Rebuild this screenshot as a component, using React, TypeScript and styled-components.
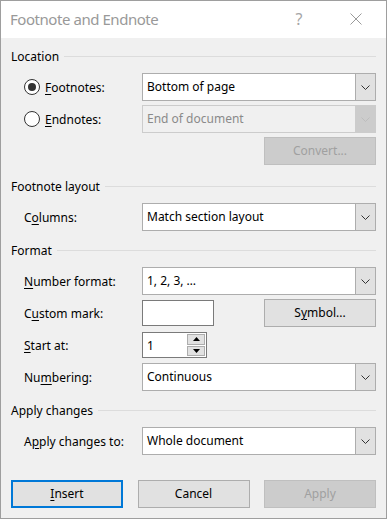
import React from "react";
import styled, { createGlobalStyle, css } from "styled-components";

const Global = createGlobalStyle`
  html, body { margin: 0; padding: 0; background: #fff; }
  body {
    font-family: "Noto Sans", "Open Sans", "DejaVu Sans", sans-serif;
    font-size: 12px;
    color: #000;
  }
  * { box-sizing: border-box; }
`;

const Window = styled.div`
  width: 387px;
  height: 519px;
  border: 1px solid #9e9e9e;
  display: flex;
  flex-direction: column;
  background: #f0f0f0;
`;

const TitleBar = styled.div`
  height: 37px;
  background: #fff;
  display: flex;
  align-items: center;
  padding-left: 9px;
  flex-shrink: 0;
`;

const Title = styled.div`
  flex: 1;
  font-size: 15px;
  letter-spacing: -0.45px;
  color: #999;
  padding-bottom: 2px;
`;

const Help = styled.div`
  width: 40px;
  text-align: center;
  font-size: 16px;
  color: #a6a6a6;
  margin-right: 14px;
  padding-bottom: 2px;
`;

const CloseBtn = styled.div`
  width: 46px;
  height: 37px;
  margin-right: 7px;
  display: flex;
  align-items: center;
  justify-content: center;
  padding-bottom: 2px;
`;

const Body = styled.div`
  flex: 1;
  padding: 10px 10px 0 9px;
  display: flex;
  flex-direction: column;
`;

const Section = styled.div<{ $first?: boolean }>`
  display: flex;
  flex-direction: column;
  margin-top: ${(p) => (p.$first ? "0" : "11px")};
`;

const Heading = styled.div`
  height: 16px;
  display: flex;
  align-items: center;
  gap: 5px;
  padding-left: 1px;
  white-space: nowrap;
`;

const Rule = styled.div`
  flex: 1;
  height: 1px;
  background: #dcdcdc;
`;

const Rows = styled.div`
  margin-top: 9px;
  padding-left: 14px;
  display: flex;
  flex-direction: column;
  gap: 4px;
`;

const Row = styled.div<{ $cols?: string }>`
  display: grid;
  grid-template-columns: ${(p) => p.$cols ?? "118px 1fr"};
  align-items: center;
  height: 28px;
`;

const EndRow = styled.div<{ $after?: number }>`
  display: flex;
  justify-content: flex-end;
  height: 28px;
  margin-bottom: ${(p) => p.$after ?? 0}px;
`;

const Label = styled.label`
  display: flex;
  align-items: center;
  gap: 5px;
  white-space: nowrap;
`;

const Key = styled.span`
  text-decoration: underline;
  text-underline-offset: 2px;
`;

const Radio = styled.span<{ $checked?: boolean }>`
  width: 16px;
  height: 16px;
  border-radius: 50%;
  border: 1px solid #333;
  background: #fff;
  display: inline-flex;
  align-items: center;
  justify-content: center;
  flex-shrink: 0;
  &::after {
    content: "";
    width: 8px;
    height: 8px;
    border-radius: 50%;
    background: ${(p) => (p.$checked ? "#333" : "transparent")};
  }
`;

const Combo = styled.div<{ $disabled?: boolean }>`
  height: 28px;
  display: flex;
  border: 1px solid ${(p) => (p.$disabled ? "#cccccc" : "#adadad")};
  background: ${(p) => (p.$disabled ? "#f0f0f0" : "#fff")};
  color: ${(p) => (p.$disabled ? "#8a8a8a" : "#000")};
`;

const ComboValue = styled.div`
  flex: 1;
  display: flex;
  align-items: center;
  padding-left: 4px;
  padding-bottom: 1px;
`;

const ComboArrow = styled.div<{ $disabled?: boolean }>`
  width: 20px;
  display: flex;
  align-items: center;
  justify-content: center;
  border-left: 1px solid ${(p) => (p.$disabled ? "#cccccc" : "#adadad")};
  background: ${(p) => (p.$disabled ? "#cccccc" : "#e1e1e1")};
  color: ${(p) => (p.$disabled ? "#bdbdbd" : "#333")};
`;

const TextBox = styled.div<{ $w: number }>`
  width: ${(p) => p.$w}px;
  height: 26px;
  border: 1px solid #7a7a7a;
  background: #fff;
  display: flex;
  align-items: center;
  padding-left: 4px;
  padding-bottom: 1px;
`;

const SpinBox = styled(TextBox)`
  padding-right: 1px;
  justify-content: space-between;
  padding-bottom: 0;
`;

const SpinButtons = styled.div`
  display: flex;
  flex-direction: column;
  gap: 1px;
  height: 22px;
`;

const SpinBtn = styled.div`
  width: 18px;
  flex: 1;
  background: #e1e1e1;
  border: 1px solid #adadad;
  display: flex;
  align-items: center;
  justify-content: center;
`;

const Button = styled.div<{ $variant?: "primary" | "disabled" }>`
  width: 112px;
  height: 28px;
  display: flex;
  align-items: center;
  justify-content: center;
  background: #e1e1e1;
  border: 1px solid #adadad;
  color: #000;
  padding-bottom: 1px;
  ${(p) =>
    p.$variant === "primary" &&
    css`
      border: 2px solid #0078d7;
    `}
  ${(p) =>
    p.$variant === "disabled" &&
    css`
      background: #cccccc;
      border-color: #bfbfbf;
      color: #a0a0a0;
    `}
`;

const Footer = styled.div`
  margin-top: 25px;
  display: flex;
  justify-content: space-between;
  padding-left: 1px;
`;

const Chevron = () => (
  <svg width="9" height="5" viewBox="0 0 9 5">
    <polyline points="0.5,0.5 4.5,4.5 8.5,0.5" fill="none" stroke="currentColor" strokeWidth="1" />
  </svg>
);

const CloseIcon = () => (
  <svg width="12" height="12" viewBox="0 0 12 12">
    <path d="M0.5 0.5 L11.5 11.5 M11.5 0.5 L0.5 11.5" stroke="#9a9a9a" strokeWidth="1" fill="none" />
  </svg>
);

const Tri = ({ up }: { up?: boolean }) => (
  <svg width="7" height="4" viewBox="0 0 7 4">
    <polygon points={up ? "0,4 7,4 3.5,0" : "0,0 7,0 3.5,4"} fill="#000" />
  </svg>
);

const Select = ({ value, disabled }: { value: string; disabled?: boolean }) => (
  <Combo $disabled={disabled}>
    <ComboValue>{value}</ComboValue>
    <ComboArrow $disabled={disabled}>
      <Chevron />
    </ComboArrow>
  </Combo>
);

export default function App() {
  return (
    <>
      <Global />
      <Window>
        <TitleBar>
          <Title>Footnote and Endnote</Title>
          <Help>?</Help>
          <CloseBtn>
            <CloseIcon />
          </CloseBtn>
        </TitleBar>
        <Body>
          <Section $first>
            <Heading>
              Location
              <Rule />
            </Heading>
            <Rows>
              <Row>
                <Label>
                  <Radio $checked />
                  <span>
                    <Key>F</Key>ootnotes:
                  </span>
                </Label>
                <Select value="Bottom of page" />
              </Row>
              <Row>
                <Label>
                  <Radio />
                  <span>
                    <Key>E</Key>ndnotes:
                  </span>
                </Label>
                <Select value="End of document" disabled />
              </Row>
              <EndRow $after={2}>
                <Button $variant="disabled">Convert...</Button>
              </EndRow>
            </Rows>
          </Section>

          <Section>
            <Heading>
              Footnote layout
              <Rule />
            </Heading>
            <Rows>
              <Row>
                <Label>
                  <span>
                    C<Key>o</Key>lumns:
                  </span>
                </Label>
                <Select value="Match section layout" />
              </Row>
            </Rows>
          </Section>

          <Section>
            <Heading>
              Format
              <Rule />
            </Heading>
            <Rows>
              <Row>
                <Label>
                  <span>
                    <Key>N</Key>umber format:
                  </span>
                </Label>
                <Select value="1, 2, 3, …" />
              </Row>
              <Row $cols="118px 72px 1fr 112px">
                <Label>
                  <span>
                    C<Key>u</Key>stom mark:
                  </span>
                </Label>
                <TextBox $w={72} />
                <span />
                <Button>
                  <span>
                    S<Key>y</Key>mbol...
                  </span>
                </Button>
              </Row>
              <Row>
                <Label>
                  <span>
                    <Key>S</Key>tart at:
                  </span>
                </Label>
                <SpinBox $w={65}>
                  <span>1</span>
                  <SpinButtons>
                    <SpinBtn>
                      <Tri up />
                    </SpinBtn>
                    <SpinBtn>
                      <Tri />
                    </SpinBtn>
                  </SpinButtons>
                </SpinBox>
              </Row>
              <Row>
                <Label>
                  <span>
                    Nu<Key>m</Key>bering:
                  </span>
                </Label>
                <Select value="Continuous" />
              </Row>
            </Rows>
          </Section>

          <Section>
            <Heading>
              Apply changes
              <Rule />
            </Heading>
            <Rows>
              <Row>
                <Label>
                  <span>
                    A<Key>p</Key>ply changes to:
                  </span>
                </Label>
                <Select value="Whole document" />
              </Row>
            </Rows>
          </Section>

          <Footer>
            <Button $variant="primary">
              <span>
                <Key>I</Key>nsert
              </span>
            </Button>
            <Button>Cancel</Button>
            <Button $variant="disabled">Apply</Button>
          </Footer>
        </Body>
      </Window>
    </>
  );
}
